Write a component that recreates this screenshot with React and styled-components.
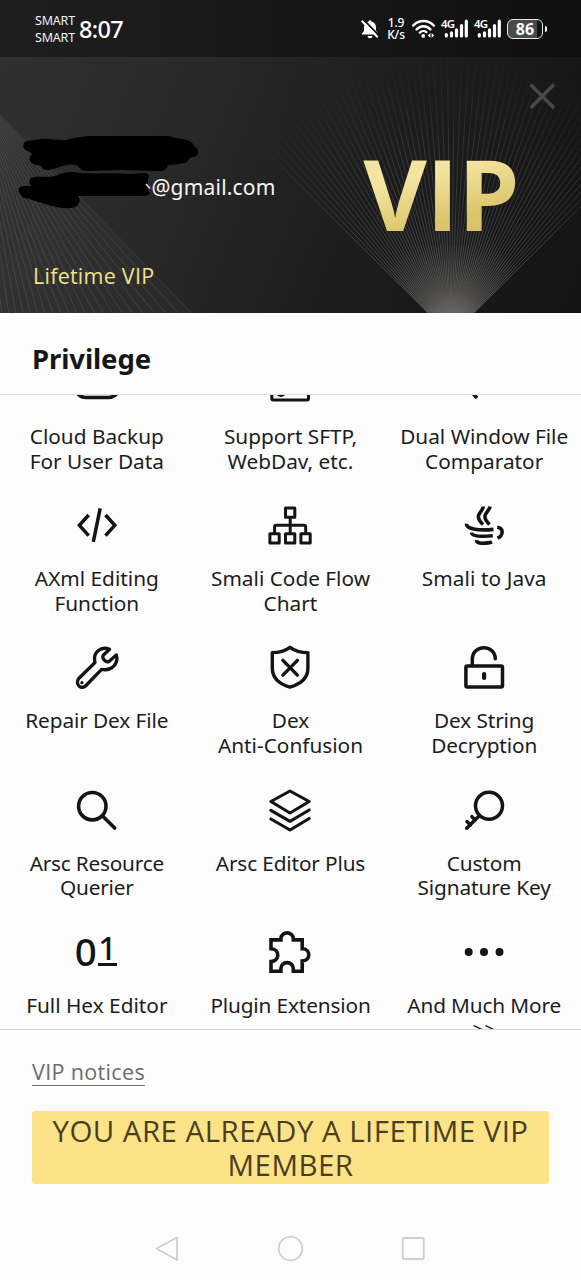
import React from "react";
import styled, { createGlobalStyle } from "styled-components";

const sans = `"Noto Sans", "Liberation Sans", sans-serif`;
// Open Sans has the plain capital I, used wherever "VIP" is written
const display = `"Open Sans", "Liberation Sans", sans-serif`;

const GlobalStyle = createGlobalStyle`
  * {
    box-sizing: border-box;
  }
  body {
    margin: 0;
    background: #fcfcfc;
    font-family: ${sans};
    color: #1c1c1c;
  }
`;

const Screen = styled.div`
  width: 581px;
  height: 1280px;
  display: flex;
  flex-direction: column;
  overflow: hidden;
  background: #fcfcfc;
`;

/* status bar */

const StatusBar = styled.header`
  height: 57px;
  flex: none;
  display: flex;
  align-items: center;
  padding: 0 35px;
  color: #fff;
  background: linear-gradient(90deg, #1f1f1f, #181818 45%, #101010);
`;

const Carriers = styled.div`
  width: 44px;
  font-size: 12.5px;
  line-height: 17px;
  letter-spacing: -0.2px;
  color: #f0f0f0;
`;

const Clock = styled.div`
  flex: 1;
  font-size: 23.5px;
  font-weight: 500;
  line-height: 30px;
  letter-spacing: -0.7px;
`;

const StatusIcons = styled.div`
  display: flex;
  align-items: center;
  gap: 6px;
  height: 30px;
  margin-right: -1px;
`;

const Speed = styled.div`
  width: 20px;
  font-size: 12px;
  font-weight: 500;
  text-align: center;
  letter-spacing: -0.1px;
`;

const SpeedLine = styled.div`
  height: 11.5px;
  line-height: 11.5px;
`;

const Signal = styled.div`
  position: relative;
  width: 27px;
  height: 20px;
`;

const SignalLabel = styled.span`
  position: absolute;
  left: 0;
  top: 0;
  font-size: 11.5px;
  line-height: 10px;
  font-weight: 600;
  letter-spacing: -0.8px;
`;

const Battery = styled.div`
  display: flex;
  align-items: center;
  gap: 2px;
  &::after {
    content: "";
    width: 2px;
    height: 6px;
    border-radius: 0 2px 2px 0;
    background: #fff;
  }
`;

const BatteryLevel = styled.div`
  width: 36px;
  height: 20px;
  border: 1.5px solid #e8e8e8;
  border-radius: 6px;
  background: linear-gradient(90deg, #4a4a4a 86%, #151515 86%);
  font-family: ${display};
  font-size: 16px;
  font-weight: 700;
  line-height: 18px;
  text-align: center;
`;

/* hero */

const Hero = styled.section`
  position: relative;
  height: 256px;
  flex: none;
  display: flex;
  justify-content: space-between;
  padding: 0 62px 0 33px;
  overflow: hidden;
  background: linear-gradient(112deg, #303030 0%, #292929 30%, #1d1d1d 62%, #141414 100%);
`;

const Rays = styled.svg`
  position: absolute;
  inset: 0;
`;

const Account = styled.div`
  position: relative;
  padding-top: 115px;
`;

const Scribble = styled.svg`
  position: absolute;
  left: -15px;
  top: 79px;
`;

const Email = styled.div`
  padding-left: 118.5px;
  font-size: 21px;
  line-height: 30px;
  letter-spacing: 0.2px;
  color: #f5f5f5;
`;

const Plan = styled.div`
  margin-top: 59px;
  font-family: ${display};
  font-size: 21.5px;
  line-height: 30px;
  letter-spacing: 0.25px;
  color: #f0e08f;
`;

const VipMark = styled.div`
  position: relative;
  padding-top: 69px;
  font-family: ${display};
  font-size: 98px;
  line-height: 134px;
  font-weight: 700;
  letter-spacing: -0.6px;
  color: transparent;
  background: linear-gradient(165deg, #f3e4a0 45%, #dcc66d 62%, #ceb458 90%);
  background-clip: text;
`;

const Close = styled.svg`
  position: absolute;
  left: 529px;
  top: 26px;
`;

/* privileges */

const Title = styled.h1`
  height: 82px;
  flex: none;
  margin: 0;
  padding: 26px 32px 0;
  font-size: 27.5px;
  line-height: 40px;
  font-weight: 700;
  letter-spacing: -0.1px;
  border-bottom: 1px solid #dedede;
  color: #161616;
`;

const Scroller = styled.main`
  height: 635px;
  flex: none;
  overflow: hidden;
  border-bottom: 1px solid #d8d8d8;
`;

const Grid = styled.div`
  display: grid;
  grid-template-columns: repeat(3, 1fr);
  grid-auto-rows: 142.2px;
  margin-top: -42px;
`;

const Cell = styled.div`
  display: flex;
  flex-direction: column;
  align-items: center;
  padding-top: 8px;
`;

const Icon = styled.svg.attrs({ width: 44, height: 44, viewBox: "0 0 44 44" })`
  flex: none;
  fill: none;
  stroke: #141414;
  stroke-width: ${(p) => p.$w || 3.6};
  stroke-linecap: ${(p) => p.$cap || "round"};
  stroke-linejoin: ${(p) => p.$join || "round"};
`;

const Label = styled.div`
  margin-top: 19px;
  font-size: 20.8px;
  line-height: 24.7px;
  letter-spacing: ${(p) => p.$track || 0}px;
  text-align: center;
  white-space: pre;
`;

const Digits = styled.div`
  width: 44px;
  height: 44px;
  display: flex;
  align-items: flex-start;
  gap: 1px;
  color: #141414;
`;

const Zero = styled.span`
  font-size: 38.5px;
  line-height: 42px;
  font-weight: 500;
`;

const One = styled.span`
  width: 19px;
  height: 34px;
  margin-top: 2px;
  border-bottom: 3px solid #141414;
  font-size: 32px;
  line-height: 31px;
  font-weight: 500;
  text-align: center;
`;

/* footer */

const Footer = styled.footer`
  flex: 1;
  display: flex;
  flex-direction: column;
  align-items: flex-start;
  padding: 29px 32px 0;
`;

const Notices = styled.a`
  font-family: ${display};
  height: 27px;
  font-size: 21.5px;
  line-height: 26px;
  letter-spacing: 0.35px;
  color: #6c6c6c;
  border-bottom: 1.5px solid #777;
`;

const Button = styled.button`
  width: 517px;
  height: 73px;
  margin-top: 25px;
  padding: 0;
  border: none;
  border-radius: 3px;
  background: #fde387;
  color: #4b3e20;
  font-family: ${display};
  font-size: 29.5px;
  line-height: 34px;
  font-weight: 500;
  letter-spacing: 0.45px;
  white-space: pre;
`;

const NavBar = styled.nav`
  width: 100%;
  display: flex;
  justify-content: center;
  gap: 97.5px;
  margin-top: 52px;
`;

const NavIcon = styled.svg.attrs({ width: 26, height: 26, viewBox: "0 0 26 26" })`
  fill: none;
  stroke: #cfcfcf;
  stroke-width: 1.8;
  stroke-linejoin: round;
`;

const BellOff = () => (
  <svg width="20" height="20" viewBox="0 0 20 20">
    <path d="M10 1.2a1.3 1.3 0 0 1 1.3 1.4c3 .7 4.7 2.8 4.7 5.6v3.6l2 2.7v1H2v-1l2-2.7V8.2c0-2.800 1.700-4.900 4.700-5.600A1.300 1.300 0 0 1 10 1.200zM7.500 17h5a2.500 2.300 0 0 1-5 0z" fill="#fff" />
    <path d="M3.800 .8 20 17.500" stroke="#121212" strokeWidth="1.800" />
    <path d="M1.700 1.700 17.700 18.200" stroke="#fff" strokeWidth="2" />
  </svg>
);

const Wifi = () => (
  <svg width="23" height="20" viewBox="0.3 0 23.4 20" fill="none" stroke="#fff" strokeWidth="2.4" strokeLinecap="round">
    <path d="M1.500 6.500C7.500.3 16.500.3 22.500 6.500M5 10.400c4.100-4.200 9.900-4.200 14 0M8.300 13.700c2-1.900 5-1.900 6.600-.6" />
    <circle cx="11.700" cy="17" r="1.900" fill="#fff" stroke="none" />
    <path d="M19 14v5l-2.600-2.500zM20.300 14v5l2.600-2.500z" fill="#fff" stroke="none" />
  </svg>
);

const Bars = () => (
  <Signal>
    <SignalLabel>4G</SignalLabel>
    <svg width="27" height="20" viewBox="0 0 27 20" stroke="#fff" strokeWidth="3.2" strokeLinecap="round">
      <path d="M5.300 15.500V17M10.500 13.800V17M15.500 10.800V17M20.500 6.500V17M25.300 2.200V17" />
    </svg>
  </Signal>
);

const fan = (x, y, r, from, to, count) =>
  Array.from({ length: count }, (_, i) => {
    const a = ((from + ((to - from) * i) / (count - 1)) * Math.PI) / 180;
    return `M${x} ${y}L${(x + r * Math.cos(a)).toFixed(1)} ${(y + r * Math.sin(a)).toFixed(1)}`;
  }).join("");

const HeroRays = () => (
  <Rays width="581" height="256">
    <defs>
      <radialGradient id="fan" gradientUnits="userSpaceOnUse" cx="451" cy="279" r="290">
        <stop offset="0" stopColor="#77756e" stopOpacity="0.6" />
        <stop offset="0.3" stopColor="#777" stopOpacity="0.55" />
        <stop offset="0.65" stopColor="#666" stopOpacity="0.4" />
        <stop offset="1" stopColor="#555" stopOpacity="0" />
      </radialGradient>
      <radialGradient id="glow" gradientUnits="userSpaceOnUse" cx="451" cy="270" r="90">
        <stop offset="0" stopColor="#6a6862" stopOpacity="0.9" />
        <stop offset="0.45" stopColor="#5c5a56" stopOpacity="0.4" />
        <stop offset="1" stopColor="#555" stopOpacity="0" />
      </radialGradient>
    </defs>
    <path d="M451 279 361 189H541z" fill="url(#glow)" />
    <path d={fan(451, 279, 330, 225, 315, 62)} stroke="url(#fan)" strokeWidth="0.8" />
    <path d="M0 58 190 256H0z" fill="#777" fillOpacity="0.06" />
    <path d={fan(-24, 33, 360, 46, 87, 24)} stroke="#777" strokeOpacity="0.34" strokeWidth="0.8" />
    <path d={fan(-110, -20, 480, 46, 62, 12)} stroke="#888" strokeOpacity="0.1" strokeWidth="0.7" />
  </Rays>
);

const Hidden = () => (
  <Scribble width="184" height="78" viewBox="0 0 184 78">
    <path d="M6 7C8 4 13 5 18 4 25 1 36 4 48 4 62 0 78-1 94 0L147 0C153-1 154 2 158 2 167 3 175 5 176 10 181 13 182 19 176 21 169 21 172 25 167 27 160 28 155 29 150 29 148 35 146 35 140 35L104 34 70 35C62 35 62 31 58 29 47 26 36 35 27 34 23 33 25 30 20 29 12 29 9 22 14 18 11 14 3 15 6 7z" />
    <path d="M12 43C15 39 27 42 37 40 45 37 46 36 55 36 74 39 93 36 112 38L126 37C131 37 132 40 130 43V54C134 58 130 60 125 60H60C64 65 60 72 53 72 44 73 40 71 34 70L14 64C10 61 5 64 3 59-1 55 0 51 5 50L14 50C11 49 11 46 12 43z" />
    <path d="M128 48 132 52.500" stroke="#ddd" strokeWidth="1.6" />
  </Scribble>
);

const items = [
  {
    label: "Cloud Backup\nFor User Data",
    icon: <Icon><path d="M11 36.500C5 36.500 1 32 1 27.500S6 18 11 18C13 11 18 7 24 8S34 14 34 20C39 20 43 24 43 28.500S39 36.500 33 36.500z" /></Icon>,
  },
  {
    label: "Support SFTP,\nWebDav, etc.",
    icon: <Icon $w={3}><path d="M3.800 8V37.500Q3.800 39 5.300 39H39Q40.500 39 40.500 37.500V12H22L18 6H3.800z" /><circle cx="13" cy="31" r="3.500" /></Icon>,
  },
  {
    label: "Dual Window File\nComparator",
    icon: <Icon $cap="butt"><path d="M38 12H5L14 4M6 26H26M5 26 15 37" /></Icon>,
  },
  {
    label: "AXml Editing\nFunction",
    icon: <Icon $w={3.5} $cap="butt" $join="miter"><path d="M13.700 12 4.400 22.300 13.700 32.700M30.500 12 39.800 22.300 30.500 32.700M25.200 5.300 18.300 38.800" /></Icon>,
  },
  {
    label: "Smali Code Flow\nChart",
    icon: (
      <Icon $w={3}>
        <path d="M17.500 5h9.300v9.300h-9.300zM1.900 30.800h9.300v9.300H1.900zM17.500 30.800h9.300v9.300h-9.300zM32.900 30.800h9.300v9.300h-9.300zM22.200 14.500V30.500M6.600 30.500V24Q6.600 22.300 8.300 22.300H36Q37.700 22.300 37.700 24V30.500" />
      </Icon>
    ),
  },
  {
    label: "Smali to Java",
    track: 0.08,
    icon: (
      <Icon $w={3.6} $cap="butt">
        <path d="M21.300 3.500C21 8.500 13.500 11 17.600 17.500Q19 19.500 21 21.500M28 3.500C27.500 8.500 20 11 24.200 17.500Q25.600 19.500 27.500 21.500M4.500 20.800C4 25.700 15 28 31.500 26.400M9.500 29.600Q10 34.600 30.800 32.800M14.700 37.200Q14.500 40 20 40.200 27 40.200 30 39M35.200 24.200C42 25 41.500 32.500 35.500 35.200" />
      </Icon>
    ),
  },
  {
    label: "Repair Dex File",
    track: -0.1,
    icon: (
      <Icon $w={3.3}>
        <path d="M34.500 4.300C26 .8 17.500 7.500 20 17.500L4 33.200C1.500 36 2.200 39.500 4.200 41.200 6.500 43 9 42.500 11 40.500L26.600 24.300C36 26.500 44 19 41.300 9.900L34 16.500C31 18 26.500 13.500 28.300 10.300z" />
        <circle cx="6.900" cy="37.700" r="1.600" fill="#141414" stroke="none" />
      </Icon>
    ),
  },
  {
    label: "Dex\nAnti-Confusion",
    icon: (
      <Icon $w={3.4}>
        <path d="M22 2.300C17 6 10 7.600 4.300 7.600V23C4.300 33.500 12 39.300 22 42.100 32 39.300 39.900 33.500 39.900 23V7.600C34 7.600 27 6 22 2.300zM14.900 15.400 29.400 30.100M29.400 15.400 14.900 30.100" />
      </Icon>
    ),
  },
  {
    label: "Dex String\nDecryption",
    track: -0.12,
    icon: (
      <Icon $w={3.5}>
        <rect x="3.900" y="20.900" width="36.600" height="21" rx="1.500" />
        <path d="M10.300 20.500V14.500C10.300 -1 32.800 -1 33.300 13.700" />
        <path d="M22.100 29V33" strokeWidth="4.200" />
      </Icon>
    ),
  },
  {
    label: "Arsc Resource\nQuerier",
    track: -0.22,
    icon: <Icon><circle cx="17.300" cy="18.200" r="13.700" /><path d="M28 28.500 39.700 40" /></Icon>,
  },
  {
    label: "Arsc Editor Plus",
    track: -0.15,
    icon: <Icon $w={3.1}><path d="M22 3 41.200 13.500 22 25 2.900 13.500zM2.900 22.300 22 33.300 41.200 22M2.900 31 22 42 41.200 30.500" /></Icon>,
  },
  {
    label: "Custom\nSignature Key",
    track: -0.1,
    icon: (
      <Icon $w={3.5}>
        <circle cx="27" cy="17.700" r="13.500" />
        <path d="M17 28 4.700 40.200M9.900 28.700 13.300 32M5 33.500 8.500 37" />
      </Icon>
    ),
  },
  {
    label: "Full Hex Editor",
    icon: <Digits><Zero>0</Zero><One>1</One></Digits>,
  },
  {
    label: "Plugin Extension",
    track: -0.15,
    icon: (
      <Icon $join="miter">
        <path d="M3 9.900H12.900V8.500A6.200 5.600 0 0 1 25.300 8.500V9.900H34.200V18.700C43 18.700 43 31 34.200 31V41.300H25.300V38.500A6.200 5.900 0 0 0 12.900 38.500V41.300H3V31.500C12 31.500 12 18.800 3 18.800z" />
      </Icon>
    ),
  },
  {
    label: "And Much More\n>>",
    track: -0.15,
    icon: <Icon><path d="M6.700 22h.01M22 22h.01M37.500 22h.01" strokeWidth="8" /></Icon>,
  },
];

const App = () => (
  <Screen>
    <GlobalStyle />
    <StatusBar>
      <Carriers>SMART<br />SMART</Carriers>
      <Clock>8:07</Clock>
      <StatusIcons>
        <BellOff />
        <Speed>
          <SpeedLine>1.9</SpeedLine>
          <SpeedLine>K/s</SpeedLine>
        </Speed>
        <Wifi />
        <Bars />
        <Bars />
        <Battery><BatteryLevel>86</BatteryLevel></Battery>
      </StatusIcons>
    </StatusBar>
    <Hero>
      <HeroRays />
      <Account>
        <Email>@gmail.com</Email>
        <Hidden />
        <Plan>Lifetime VIP</Plan>
      </Account>
      <VipMark>VIP</VipMark>
      <Close width="27" height="27" viewBox="0 0 27 27" stroke="#484848" strokeWidth="3.6">
        <path d="M1.500 1.500 25 25M25 1.500 1.500 25" />
      </Close>
    </Hero>
    <Title>Privilege</Title>
    <Scroller>
      <Grid>
        {items.map((item) => (
          <Cell key={item.label}>
            {item.icon}
            <Label $track={item.track}>{item.label}</Label>
          </Cell>
        ))}
      </Grid>
    </Scroller>
    <Footer>
      <Notices>VIP notices</Notices>
      <Button>{"YOU ARE ALREADY A LIFETIME VIP\nMEMBER"}</Button>
      <NavBar>
        <NavIcon><path d="M2.500 12.500 23 1.500V24z" /></NavIcon>
        <NavIcon><circle cx="12.500" cy="12.500" r="11.800" /></NavIcon>
        <NavIcon><rect x="1.800" y="2" width="21" height="21" rx="1" /></NavIcon>
      </NavBar>
    </Footer>
  </Screen>
);

export default App;
